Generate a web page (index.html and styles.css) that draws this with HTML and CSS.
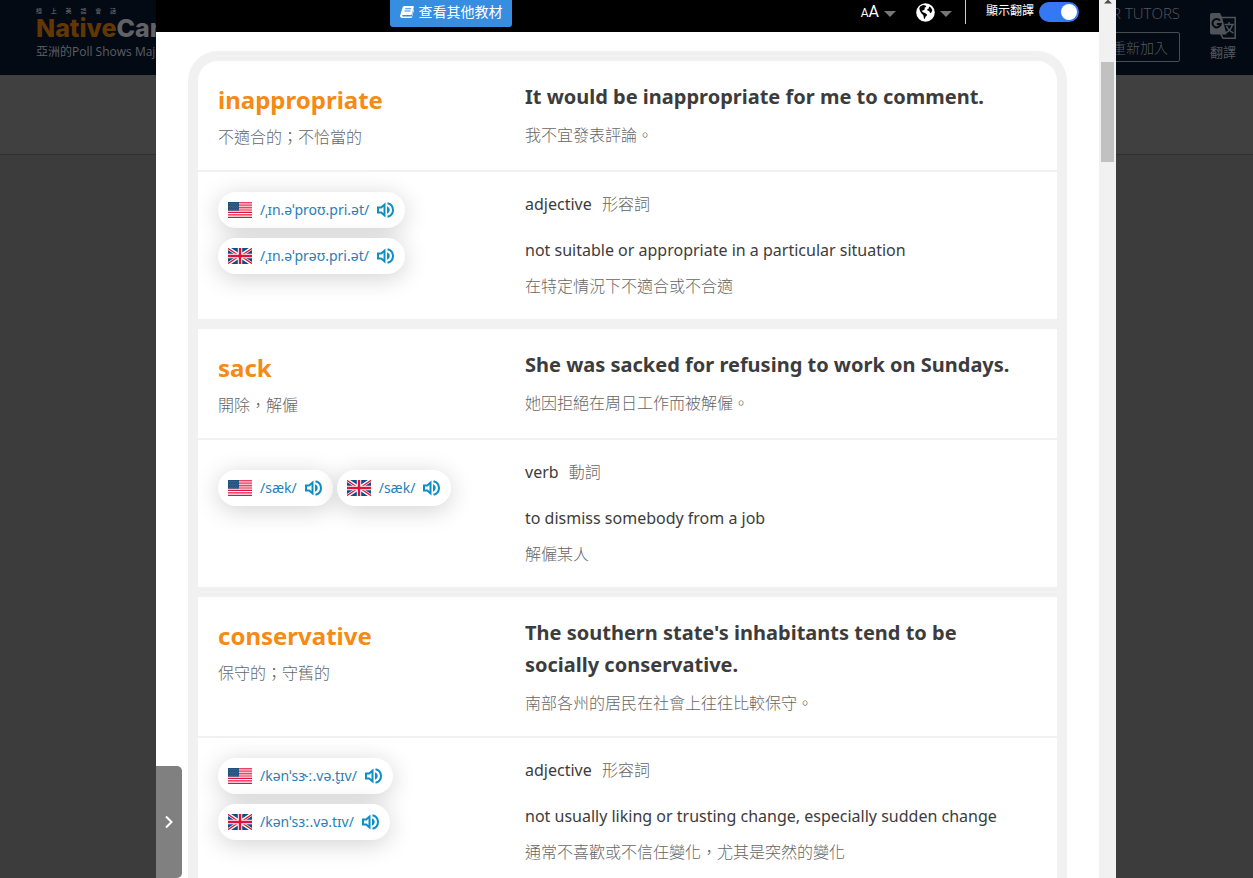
FILE: index.html
```html
<!DOCTYPE html>
<html lang="zh-TW">
<head>
<meta charset="utf-8">
<title>NativeCamp</title>
<link rel="stylesheet" href="styles.css">
</head>
<body>
<svg class="defs" aria-hidden="true">
  <symbol id="us" viewBox="0 0 24 16">
    <path fill="#fff" d="M0 0h24v16H0z"/>
    <path stroke="#e0123c" stroke-width="1.2" d="M0 .6h24M0 3.1h24M0 5.6h24M0 8h24M0 10.4h24M0 12.9h24M0 15.4h24"/>
    <path fill="#ff7a93" opacity=".45" d="M11 0h13v9H11z"/>
    <path fill="#1d4f7c" d="M0 0h11v8.6H0z"/>
    <path stroke="#7d9cba" stroke-width=".6" stroke-dasharray=".7 1.1" d="M1 1.4h9.500M2 2.900h8.500M1 4.400h9.500M2 5.900h8.500M1 7.400h9.500"/>
  </symbol>
  <symbol id="uk" viewBox="0 0 24 16">
    <path fill="#0b4f86" d="M0 0h24v16H0z"/>
    <path stroke="#fff" stroke-width="3.400" d="M0 0l24 16M24 0L0 16"/>
    <path stroke="#e0123c" stroke-width="1.300" d="M0 .4l11 7.300M24 .4l-11 7.300M0 15.600l11-7.300M24 15.600l-11-7.300"/>
    <path stroke="#fff" stroke-width="4.400" d="M12 0v16M0 8h24"/>
    <path stroke="#e0123c" stroke-width="2.400" d="M12 0v16M0 8h24"/>
  </symbol>
  <symbol id="speaker" viewBox="0 0 18 16">
    <path fill="none" stroke="#0b8fc4" stroke-width="2" d="M1 5.500h3.200L7.500 2.600v10.800l-3.300-2.900H1z"/>
    <path fill="none" stroke="#0b8fc4" stroke-width="2" d="M10.500 1.200c7.300 1.800 7.300 11.800 0 13.600"/>
    <path fill="#0b8fc4" d="M10 4.300c3.600 1.400 3.600 6 0 7.400z"/>
  </symbol>
</svg>

<div class="page">
  <header class="site-header">
    <div class="brand">
      <span class="brand-tag"><i>線</i><i>上</i><i>英</i><i>語</i><i>會</i><i>話</i></span>
      <span class="brand-name"><b>Native</b>Camp.</span>
      <span class="brand-title">亞洲的Poll Shows Majority</span>
    </div>
    <div class="account">
      <a class="tutors" href="#">OUR TUTORS</a>
      <button class="rejoin" type="button">重新加入</button>
    </div>
    <button class="translate" type="button">
      <svg width="28" height="28" viewBox="0 0 28 28" aria-hidden="true">
        <path fill="none" stroke="#505358" stroke-width="1.500" d="M12 5.500h14.200v20.800H14l-3-6"/>
        <path fill="#505358" d="M3 1h8l2 4 4.500 17.500H3a2 2 0 0 1-2-2V3a2 2 0 0 1 2-2z"/>
        <path fill="none" stroke="#030a14" stroke-width="2" d="M11 8.600a4.200 4.200 0 1 0 .8 3.400H7.800"/>
        <path fill="none" stroke="#505358" stroke-width="1.500" d="M15.500 12.500H25M20 10v2.500M23.500 12.500c-1 4-4 7-7 8.500M17.500 14c1 3 4 5.500 7 7"/>
      </svg>
      <span>翻譯</span>
    </button>
  </header>
  <div class="site-sub"></div>
</div>

<div class="overlay">
  <main class="modal">
    <div class="sheet">
      <div class="toolbar">
        <button class="other" type="button">
          <svg width="14" height="12" viewBox="0 0 14 12" aria-hidden="true">
            <path fill="#fff" fill-rule="evenodd" d="M4.500 0H13c.8 0 1 .5.8 1.200L11.500 9H3c-1.200 0-1.200 1.500 0 1.500h8.800L13.500 3l.5 1-2 7.300c-.2.500-.5.700-1 .7H2C.5 12-.3 10.800.2 9.200L2.600 1.500C3 .500 3.500 0 4.500 0zM5.300 2.300l-.3 1h6l.3-1zM4.600 4.600l-.3 1h6l.3-1z"/>
          </svg>
          <span>查看其他教材</span>
        </button>
        <div class="tools">
          <button class="tool" type="button" aria-label="文字大小">
            <span class="aa"><small>A</small>A</span><i class="caret"></i>
          </button>
          <button class="tool" type="button" aria-label="語言">
            <svg width="19" height="19" viewBox="0 0 19 19" aria-hidden="true">
              <circle cx="9.500" cy="9.500" r="9.300" fill="#fff"/>
              <path d="M4 3.500l3-1.500 2.500.5.800 1.300-1.800 1 .3 1.400L7 7.500l-1.500.3L7 9.300l2.500 1 1.800 1.700-1.800 1.800-.7 2.200-.8-.5-.7-3.200L5.500 10.500 4 8 3.300 5.500zM13 3.500l1.800 1L16.300 7l-.8 2.300-1.300 1-1-2.300-1.700-.5-.3-1.300 1.600-.8z"/>
            </svg><i class="caret"></i>
          </button>
          <span class="rule"></span>
          <label class="switch"><span>顯示翻譯</span><input type="checkbox" checked></label>
        </div>
      </div>

      <div class="vocab">
        <section class="entry">
          <div class="row head">
            <div><h2>inappropriate</h2><p class="zh near">不適合的；不恰當的</p></div>
            <div><h3>It would be inappropriate for me to comment.</h3><p class="zh">我不宜發表評論。</p></div>
          </div>
          <div class="row body">
            <div class="prons">
              <button class="pron" type="button"><svg width="24" height="16"><use href="#us"/></svg><span>/ˌɪn.əˈproʊ.pri.ət/</span><svg width="18" height="16"><use href="#speaker"/></svg></button>
              <button class="pron" type="button"><svg width="24" height="16"><use href="#uk"/></svg><span>/ˌɪn.əˈprəʊ.pri.ət/</span><svg width="18" height="16"><use href="#speaker"/></svg></button>
            </div>
            <div><p class="pos">adjective <span class="zh">形容詞</span></p><p class="def">not suitable or appropriate in a particular situation</p><p class="zh">在特定情況下不適合或不合適</p></div>
          </div>
        </section>

        <section class="entry">
          <div class="row head">
            <div><h2>sack</h2><p class="zh near">開除，解僱</p></div>
            <div><h3>She was sacked for refusing to work on Sundays.</h3><p class="zh">她因拒絕在周日工作而被解僱。</p></div>
          </div>
          <div class="row body">
            <div class="prons inline">
              <button class="pron" type="button"><svg width="24" height="16"><use href="#us"/></svg><span>/sæk/</span><svg width="18" height="16"><use href="#speaker"/></svg></button>
              <button class="pron" type="button"><svg width="24" height="16"><use href="#uk"/></svg><span>/sæk/</span><svg width="18" height="16"><use href="#speaker"/></svg></button>
            </div>
            <div><p class="pos">verb <span class="zh">動詞</span></p><p class="def">to dismiss somebody from a job</p><p class="zh">解僱某人</p></div>
          </div>
        </section>

        <section class="entry">
          <div class="row head">
            <div><h2>conservative</h2><p class="zh near">保守的；守舊的</p></div>
            <div><h3>The southern state's inhabitants tend to be socially conservative.</h3><p class="zh">南部各州的居民在社會上往往比較保守。</p></div>
          </div>
          <div class="row body">
            <div class="prons">
              <button class="pron" type="button"><svg width="24" height="16"><use href="#us"/></svg><span>/kənˈsɝː.və.t̬ɪv/</span><svg width="18" height="16"><use href="#speaker"/></svg></button>
              <button class="pron" type="button"><svg width="24" height="16"><use href="#uk"/></svg><span>/kənˈsɜː.və.tɪv/</span><svg width="18" height="16"><use href="#speaker"/></svg></button>
            </div>
            <div><p class="pos">adjective <span class="zh">形容詞</span></p><p class="def">not usually liking or trusting change, especially sudden change</p><p class="zh">通常不喜歡或不信任變化，尤其是突然的變化</p></div>
          </div>
        </section>
      </div>

      <button class="drawer" type="button" aria-label="展開">
        <svg width="8" height="14" viewBox="0 0 8 14" aria-hidden="true"><path fill="none" stroke="#fff" stroke-width="2" d="M1 1.500L6.500 7 1 12.500"/></svg>
      </button>
    </div>
    <div class="scroll" aria-hidden="true">
      <svg width="8" height="4" viewBox="0 0 8 4"><path fill="#505050" d="M0 3.500L4-.5l4 4z"/></svg>
      <div class="thumb"></div>
    </div>
  </main>
</div>
</body>
</html>
```
FILE: styles.css
```css
* { box-sizing: border-box; }
html, body { height: 100%; }
body {
  margin: 0;
  overflow: hidden;
  background: #3c3c3c;
  font-family: "Noto Sans", "Noto Sans CJK TC", sans-serif;
}
h2, h3, p { margin: 0; }
button { border: 0; padding: 0; background: none; font: inherit; color: inherit; cursor: pointer; }
svg { display: block; flex: none; }
.defs { position: absolute; width: 0; height: 0; }

.site-header {
  display: flex;
  align-items: flex-start;
  height: 75px;
  padding: 0 16px 0 36px;
  background: #030a14;
  color: #55585c;
}
.brand { display: flex; flex-direction: column; margin-right: auto; padding-top: 6px; white-space: nowrap; }
.brand-tag { display: flex; justify-content: space-between; width: 80px; font: 700 6px/10px "Noto Sans CJK TC", sans-serif; }
.brand-tag i { font-style: normal; }
.brand-name { margin-top: 1px; font: 800 25px/22px Inter, sans-serif; color: #606265; }
.brand-name b { font-weight: 800; color: #623704; }
.brand-title { font: 12px/18px "Open Sans", "Noto Sans CJK TC", sans-serif; margin-top: 4px; color: #5c5f63; }
.account { display: flex; flex-direction: column; align-items: flex-end; padding-top: 2px; }
.tutors { color: #55585c; font: 300 15px/22px "Open Sans", sans-serif; text-decoration: none; }
.rejoin { width: 80px; height: 30px; margin-top: 8px; border: 1px solid #484b50; border-radius: 2px; font-size: 14px; font-weight: 300; }
.translate { display: flex; flex-direction: column; align-items: center; gap: 4px; margin-left: 29px; padding-top: 12px; font-size: 13px; line-height: 16px; }
.site-sub { height: 80px; background: #404040; border-bottom: 1px solid #303030; }

.overlay { position: fixed; inset: 0; display: flex; padding: 0 137px 0 156px; }
.modal { flex: 1; display: flex; background: #fff; overflow: hidden; }
.sheet { flex: 1; min-width: 0; position: relative; }
.toolbar { display: flex; align-items: flex-start; justify-content: space-between; height: 32px; padding: 0 20px 0 234px; background: #000; color: #fff; }
.other { display: flex; align-items: center; justify-content: center; gap: 5px; width: 122px; height: 27px; padding-bottom: 3px; border-radius: 0 0 3px 3px; background: #378de0; font-size: 14px; line-height: 20px; }
.tools { display: flex; align-items: flex-start; }
.tool { display: flex; align-items: center; gap: 5px; height: 24px; margin-right: 20px; }
.tool .caret { margin-top: 3px; }
.aa { font: 400 16px/20px Roboto, sans-serif; }
.aa small { font-size: 12px; }
.caret { border: 6px solid transparent; border-top-color: #777; border-bottom: 0; }
.rule { width: 1px; height: 24px; margin: 0 20px 0 -7px; background: #ccc; }
.switch { display: flex; align-items: center; gap: 5px; height: 22px; font-size: 12px; line-height: 20px; }
.switch input { appearance: none; width: 40px; height: 20px; margin: 2px 0 0; padding: 2px; border-radius: 10px; background: #3478f6; display: flex; justify-content: flex-end; }
.switch input::before { content: ""; width: 16px; height: 16px; border-radius: 50%; background: #fff; }

.vocab { margin: 19px 32px 0; padding-bottom: 60px; border: 10px solid #f1f1f1; border-radius: 30px; }
.entry + .entry { border-top: 10px solid #f1f1f1; }
.row { display: grid; grid-template-columns: 287px 1fr; gap: 20px; padding: 20px 30px 20px 20px; }
.body { border-top: 2px solid #f1f1f1; }
h2 { color: #f58a14; font-size: 24px; line-height: 38px; }
h3 { color: #3c3c3c; font-size: 20px; line-height: 32px; }
.zh { color: #666; font-size: 16px; font-weight: 300; line-height: 26px; margin-top: 9px; }
.near { margin-top: 5px; }
.pos, .def { color: #3c3c3c; font-size: 16px; line-height: 24px; }
.pos .zh { line-height: 20px; margin-left: 6px; }
.def { margin-top: 22px; }
.body .zh { margin-top: 11px; }
.prons { display: flex; flex-direction: column; align-items: flex-start; gap: 10px; }
.inline { flex-direction: row; gap: 4px; padding-top: 10px; }
.pron { display: flex; align-items: center; gap: 8px; height: 36px; padding: 0 10px; border-radius: 18px; background: #fff; box-shadow: 0 4px 24px rgba(0, 0, 0, .18); color: #2a80b9; font-size: 14px; line-height: 18px; white-space: nowrap; }

.drawer { position: absolute; left: 0; bottom: 0; display: flex; align-items: center; justify-content: center; width: 26px; height: 112px; border-radius: 0 5px 5px 0; background: #808080; }
.scroll { display: flex; flex-direction: column; align-items: center; width: 17px; background: #f1f1f1; }
.thumb { width: 13px; height: 100px; margin-top: 58px; background: #c1c1c1; }
```
